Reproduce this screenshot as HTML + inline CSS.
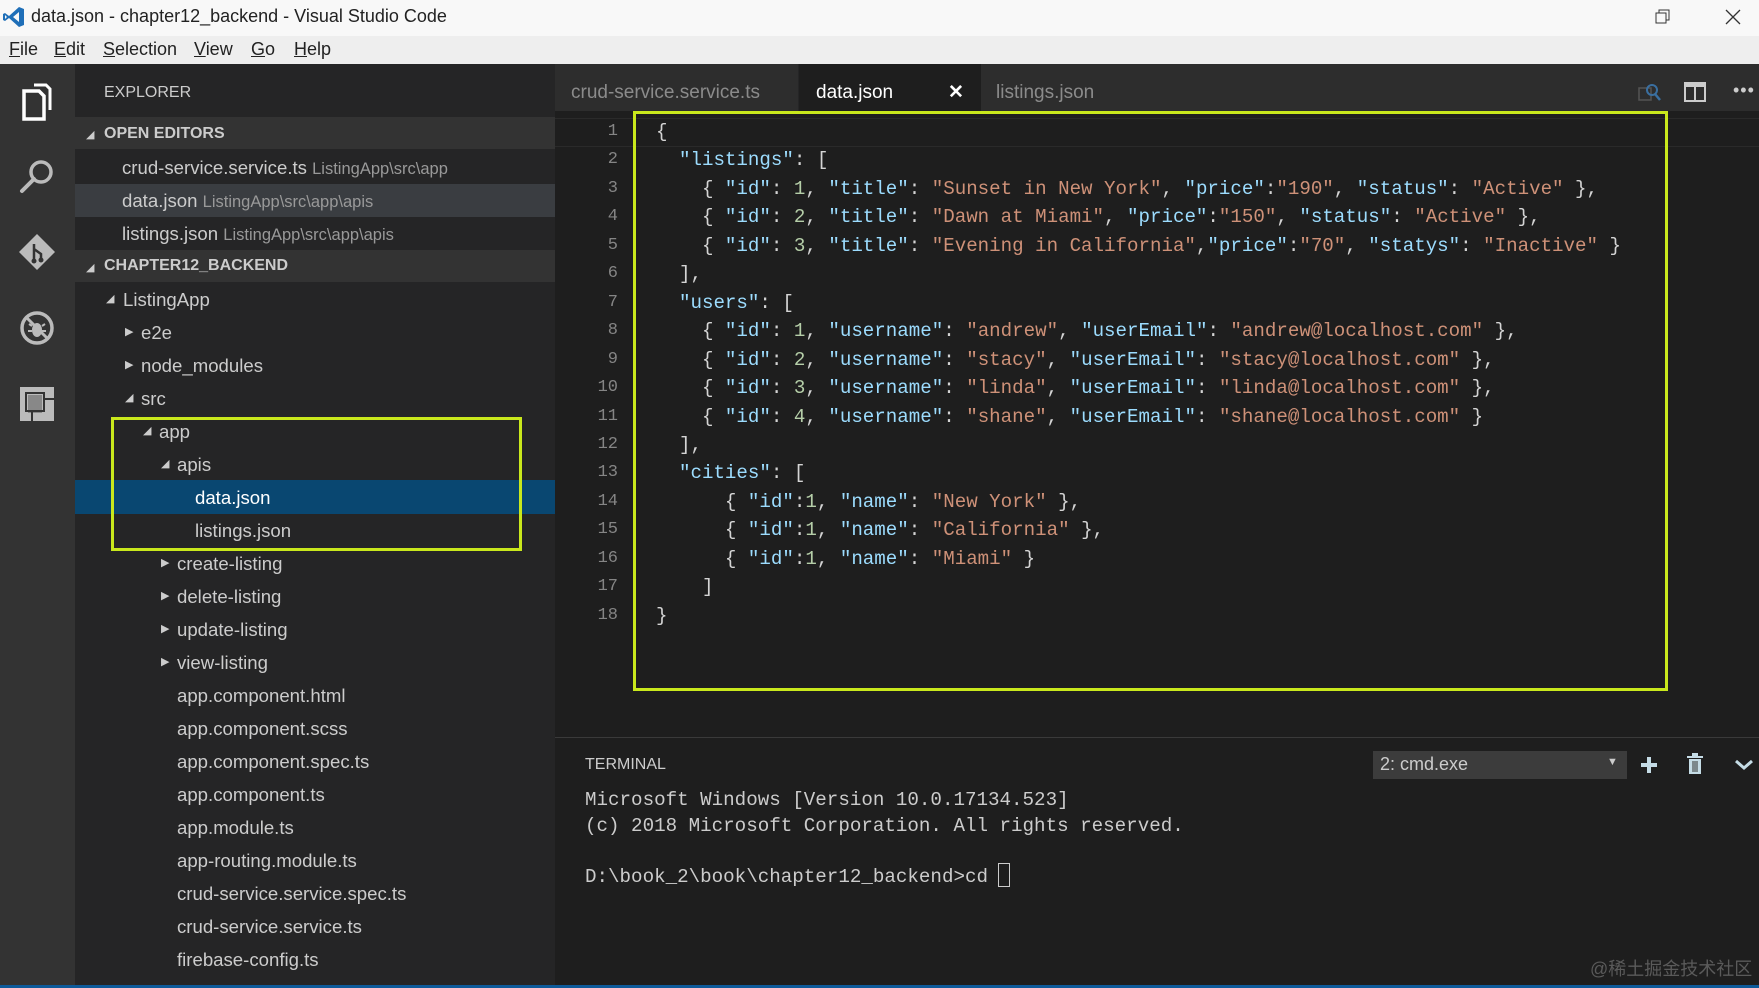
<!DOCTYPE html>
<html><head><meta charset="utf-8"><style>
*{margin:0;padding:0;box-sizing:border-box}
body{width:1759px;height:988px;overflow:hidden;background:#1e1e1e;font-family:"Segoe UI","Liberation Sans",sans-serif;position:relative}
.a{position:absolute;white-space:pre}
.mono{font-family:"Liberation Mono",monospace}
.title{left:0;top:0;width:1759px;height:36px;background:#f8f8f8}
.menu{left:0;top:36px;width:1759px;height:28px;background:#eeeeee}
.menu span{position:absolute;top:3px;font-size:18px;color:#222}
.act{left:0;top:64px;width:75px;height:924px;background:#333}
.side{left:75px;top:64px;width:480px;height:924px;background:#252526}
.row{position:absolute;left:75px;width:480px;height:33px;font-size:18.6px;color:#ccc;line-height:33px}
.tw{position:absolute;font-size:11px;color:#ccc}
.code{position:absolute;left:656px;font-size:19.15px;line-height:28.45px;color:#d4d4d4;white-space:pre}
.ln{position:absolute;left:570px;width:48px;text-align:right;font-size:17px;line-height:28.45px;color:#858585;font-family:"Liberation Mono",monospace}
.k{color:#9cdcfe}.s{color:#ce9178}.n{color:#b5cea8}
</style></head><body>
<div class="a title"></div>
<svg class="a" style="left:3px;top:6px" width="22" height="22" viewBox="0 0 22 22"><path d="M16 1 L21 3 V19 L16 21 L6 12 L2 15 L0 14 V8 L2 7 L6 10 Z M16 6 L10 11 L16 16 Z M2 9 V13 L4 11 Z" fill="#1f6fb8"/></svg>
<div class="a" style="left:31px;top:6px;font-size:18px;color:#222">data.json - chapter12_backend - Visual Studio Code</div>
<svg class="a" style="left:1655px;top:9px" width="16" height="16"><rect x="1" y="4" width="10" height="10" fill="none" stroke="#333"/><path d="M4 4V1H14V11H11" fill="none" stroke="#333"/></svg>
<svg class="a" style="left:1725px;top:9px" width="16" height="16"><path d="M1 1L15 15M15 1L1 15" stroke="#333" stroke-width="1.3"/></svg>
<div class="a menu"><span style="left:9px"><u>F</u>ile</span><span style="left:54px"><u>E</u>dit</span><span style="left:103px"><u>S</u>election</span><span style="left:194px"><u>V</u>iew</span><span style="left:251px"><u>G</u>o</span><span style="left:294px"><u>H</u>elp</span></div>

<div class="a act"></div>
<svg class="a" style="left:20px;top:82px" width="36" height="40" viewBox="0 0 36 40"><path d="M14 3H26L30 7V28" fill="none" stroke="#fff" stroke-width="3"/><path d="M4 9H19L24 14V37H4Z" fill="none" stroke="#fff" stroke-width="3.5"/></svg>
<svg class="a" style="left:18px;top:158px" width="38" height="38" viewBox="0 0 38 38"><circle cx="23" cy="14" r="10" fill="none" stroke="#bbb" stroke-width="3.5"/><path d="M16 21L4 33" stroke="#bbb" stroke-width="4" stroke-linecap="round"/></svg>
<svg class="a" style="left:17px;top:232px" width="40" height="40" viewBox="0 0 40 40"><path d="M20 2L38 20L20 38L2 20Z" fill="#bbb"/><path d="M17 12V28M17 17L24 22V27" stroke="#333" stroke-width="2.5" fill="none"/><circle cx="17" cy="29" r="2.5" fill="#333"/><circle cx="24" cy="28" r="2.5" fill="#333"/></svg>
<svg class="a" style="left:19px;top:310px" width="36" height="36" viewBox="0 0 36 36"><circle cx="18" cy="18" r="15" fill="none" stroke="#bbb" stroke-width="3.5"/><path d="M8 8L28 28" stroke="#bbb" stroke-width="3"/><ellipse cx="18" cy="20" rx="5" ry="7" fill="#bbb"/><path d="M10 14L13 16M26 14L23 16M9 21H13M27 21H23" stroke="#bbb" stroke-width="2"/></svg>
<svg class="a" style="left:20px;top:387px" width="34" height="34" viewBox="0 0 34 34"><rect x="0" y="0" width="34" height="34" fill="#bbb"/><rect x="8" y="8" width="14" height="18" fill="#888"/><path d="M6 6H24V24H6Z M24 12H34 M12 24V34" stroke="#333" stroke-width="2" fill="none"/></svg>

<div class="a side"></div>
<div class="a" style="left:104px;top:84px;font-size:16px;color:#ccc">EXPLORER</div>
<div class="a" style="left:75px;top:117px;width:480px;height:32px;background:#333"></div>
<div class="tw" style="left:86px;top:128px">◢</div>
<div class="a" style="left:104px;top:125px;font-size:16px;font-weight:bold;color:#ccc">OPEN EDITORS</div>
<div class="row" style="top:151px"><span style="margin-left:47px">crud-service.service.ts</span> <span style="color:#999;font-size:16.5px">ListingApp\src\app</span></div>
<div class="row" style="top:184px;background:#3a3d41"><span style="margin-left:47px">data.json</span> <span style="color:#999;font-size:16.5px">ListingApp\src\app\apis</span></div>
<div class="row" style="top:217px"><span style="margin-left:47px">listings.json</span> <span style="color:#999;font-size:16.5px">ListingApp\src\app\apis</span></div>
<div class="a" style="left:75px;top:250px;width:480px;height:32px;background:#333"></div>
<div class="tw" style="left:86px;top:261px">◢</div>
<div class="a" style="left:104px;top:257px;font-size:16px;font-weight:bold;color:#ccc">CHAPTER12_BACKEND</div>

<div class="a" style="left:75px;top:480px;width:480px;height:34px;background:#094771"></div>

<div class="row" style="top:283px"><span class="tw" style="left:31px;top:0">◢</span><span style="margin-left:48px">ListingApp</span></div>
<div class="row" style="top:316px"><span class="tw" style="left:50px;top:0">▶</span><span style="margin-left:66px">e2e</span></div>
<div class="row" style="top:349px"><span class="tw" style="left:50px;top:0">▶</span><span style="margin-left:66px">node_modules</span></div>
<div class="row" style="top:382px"><span class="tw" style="left:50px;top:0">◢</span><span style="margin-left:66px">src</span></div>
<div class="row" style="top:415px"><span class="tw" style="left:68px;top:0">◢</span><span style="margin-left:84px">app</span></div>
<div class="row" style="top:448px"><span class="tw" style="left:86px;top:0">◢</span><span style="margin-left:102px">apis</span></div>
<div class="row" style="top:481px;color:#fff"><span style="margin-left:120px">data.json</span></div>
<div class="row" style="top:514px"><span style="margin-left:120px">listings.json</span></div>
<div class="row" style="top:547px"><span class="tw" style="left:86px;top:0">▶</span><span style="margin-left:102px">create-listing</span></div>
<div class="row" style="top:580px"><span class="tw" style="left:86px;top:0">▶</span><span style="margin-left:102px">delete-listing</span></div>
<div class="row" style="top:613px"><span class="tw" style="left:86px;top:0">▶</span><span style="margin-left:102px">update-listing</span></div>
<div class="row" style="top:646px"><span class="tw" style="left:86px;top:0">▶</span><span style="margin-left:102px">view-listing</span></div>
<div class="row" style="top:679px"><span style="margin-left:102px">app.component.html</span></div>
<div class="row" style="top:712px"><span style="margin-left:102px">app.component.scss</span></div>
<div class="row" style="top:745px"><span style="margin-left:102px">app.component.spec.ts</span></div>
<div class="row" style="top:778px"><span style="margin-left:102px">app.component.ts</span></div>
<div class="row" style="top:811px"><span style="margin-left:102px">app.module.ts</span></div>
<div class="row" style="top:844px"><span style="margin-left:102px">app-routing.module.ts</span></div>
<div class="row" style="top:877px"><span style="margin-left:102px">crud-service.service.spec.ts</span></div>
<div class="row" style="top:910px"><span style="margin-left:102px">crud-service.service.ts</span></div>
<div class="row" style="top:943px"><span style="margin-left:102px">firebase-config.ts</span></div>

<div class="a" style="left:111px;top:417px;width:411px;height:134px;border:3.5px solid #c9e81c"></div>

<!-- tabs -->
<div class="a" style="left:555px;top:64px;width:1204px;height:47px;background:#2d2d2d"></div>
<div class="a" style="left:555px;top:64px;width:244px;height:47px;background:#2d2d2d;border-right:1px solid #252526"></div>
<div class="a" style="left:571px;top:82px;font-size:19px;color:#8b8b8b">crud-service.service.ts</div>
<div class="a" style="left:799px;top:64px;width:182px;height:47px;background:#1e1e1e"></div>
<div class="a" style="left:816px;top:82px;font-size:19px;color:#fff">data.json</div>
<div class="a" style="left:948px;top:81px;font-size:19px;color:#fff;font-weight:bold">✕</div>
<div class="a" style="left:996px;top:82px;font-size:19px;color:#8b8b8b">listings.json</div>
<svg class="a" style="left:1638px;top:80px" width="24" height="24"><rect x="1" y="8" width="12" height="12" fill="none" stroke="#555" stroke-width="1.5"/><circle cx="14" cy="10" r="5" fill="none" stroke="#3a6fa0" stroke-width="2"/><path d="M17 14L22 20" stroke="#3a6fa0" stroke-width="2.5"/></svg>
<svg class="a" style="left:1684px;top:81px" width="22" height="22"><rect x="1" y="2" width="20" height="18" fill="none" stroke="#ccc" stroke-width="2"/><rect x="1" y="2" width="20" height="4" fill="#ccc"/><path d="M11 2V20" stroke="#ccc" stroke-width="2"/></svg>
<div class="a" style="left:1733px;top:80px;font-size:18px;color:#ccc;letter-spacing:1px">•••</div>

<!-- current line -->
<div class="a" style="left:555px;top:118px;width:1204px;height:29px;border-top:1px solid #2a2a2a;border-bottom:1px solid #2a2a2a"></div>
<div class="ln" style="top:118px">1<br>2<br>3<br>4<br>5<br>6<br>7<br>8<br>9<br>10<br>11<br>12<br>13<br>14<br>15<br>16<br>17<br>18</div>
<div class="code mono" style="top:118px">{
  <span class="k">"listings"</span>: [
    { <span class="k">"id"</span>: <span class="n">1</span>, <span class="k">"title"</span>: <span class="s">"Sunset in New York"</span>, <span class="k">"price"</span>:<span class="s">"190"</span>, <span class="k">"status"</span>: <span class="s">"Active"</span> },
    { <span class="k">"id"</span>: <span class="n">2</span>, <span class="k">"title"</span>: <span class="s">"Dawn at Miami"</span>, <span class="k">"price"</span>:<span class="s">"150"</span>, <span class="k">"status"</span>: <span class="s">"Active"</span> },
    { <span class="k">"id"</span>: <span class="n">3</span>, <span class="k">"title"</span>: <span class="s">"Evening in California"</span>,<span class="k">"price"</span>:<span class="s">"70"</span>, <span class="k">"statys"</span>: <span class="s">"Inactive"</span> }
  ],
  <span class="k">"users"</span>: [
    { <span class="k">"id"</span>: <span class="n">1</span>, <span class="k">"username"</span>: <span class="s">"andrew"</span>, <span class="k">"userEmail"</span>: <span class="s">"andrew@localhost.com"</span> },
    { <span class="k">"id"</span>: <span class="n">2</span>, <span class="k">"username"</span>: <span class="s">"stacy"</span>, <span class="k">"userEmail"</span>: <span class="s">"stacy@localhost.com"</span> },
    { <span class="k">"id"</span>: <span class="n">3</span>, <span class="k">"username"</span>: <span class="s">"linda"</span>, <span class="k">"userEmail"</span>: <span class="s">"linda@localhost.com"</span> },
    { <span class="k">"id"</span>: <span class="n">4</span>, <span class="k">"username"</span>: <span class="s">"shane"</span>, <span class="k">"userEmail"</span>: <span class="s">"shane@localhost.com"</span> }
  ],
  <span class="k">"cities"</span>: [
      { <span class="k">"id"</span>:<span class="n">1</span>, <span class="k">"name"</span>: <span class="s">"New York"</span> },
      { <span class="k">"id"</span>:<span class="n">1</span>, <span class="k">"name"</span>: <span class="s">"California"</span> },
      { <span class="k">"id"</span>:<span class="n">1</span>, <span class="k">"name"</span>: <span class="s">"Miami"</span> }
    ]
}</div>
<div class="a" style="left:633px;top:111px;width:1035px;height:580px;border:3.5px solid #c9e81c"></div>

<!-- terminal -->
<div class="a" style="left:555px;top:737px;width:1204px;height:1px;background:#3a3a3a"></div>
<div class="a" style="left:585px;top:756px;font-size:16px;color:#ccc">TERMINAL</div>
<div class="a" style="left:1373px;top:751px;width:254px;height:28px;background:#3c3c3c"></div>
<div class="a" style="left:1380px;top:754px;font-size:18px;color:#ccc">2: cmd.exe</div>
<div class="a" style="left:1607px;top:756px;font-size:11px;color:#ccc">▼</div>
<svg class="a" style="left:1640px;top:756px" width="18" height="18"><path d="M9 1V17M1 9H17" stroke="#c5dce6" stroke-width="4"/></svg>
<svg class="a" style="left:1686px;top:753px" width="18" height="22"><rect x="1" y="3" width="16" height="2" fill="#c5dce6"/><rect x="6" y="0" width="6" height="3" fill="#c5dce6"/><rect x="3" y="6" width="12" height="15" fill="#c5dce6"/><path d="M7 8V19M9 8V19M11 8V19" stroke="#333" stroke-width="1"/></svg>
<svg class="a" style="left:1734px;top:759px" width="20" height="12"><path d="M2 2L10 9L18 2" fill="none" stroke="#c5dce6" stroke-width="3"/></svg>
<div class="a mono" style="left:585px;top:788px;font-size:19.2px;line-height:25.8px;color:#ccc">Microsoft Windows [Version 10.0.17134.523]
(c) 2018 Microsoft Corporation. All rights reserved.

D:\book_2\book\chapter12_backend&gt;cd </div>
<div class="a" style="left:998px;top:863px;width:12px;height:24px;border:1px solid #ccc"></div>
<div class="a" style="left:1590px;top:955px;font-size:18px;color:#5a5a5a;font-family:'Liberation Sans','Noto Sans CJK SC',sans-serif">@稀土掘金技术社区</div>
<div class="a" style="left:0;top:985px;width:1759px;height:3px;background:#0e5a9a"></div>
</body></html>
